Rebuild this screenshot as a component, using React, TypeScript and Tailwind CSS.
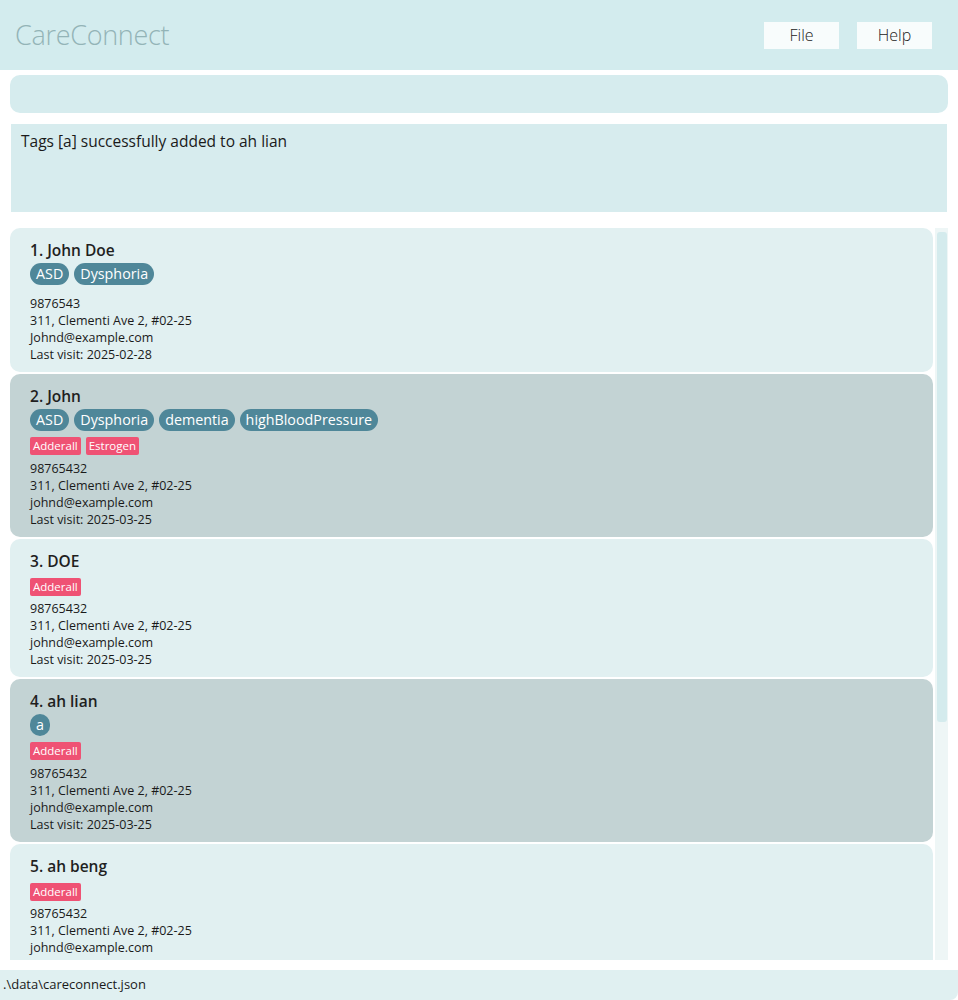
import React from "react";

interface Patient {
  id: number;
  name: string;
  tags: string[];
  meds: string[];
  phone: string;
  address: string;
  email: string;
  lastVisit: string;
}

const patients: Patient[] = [
  {
    id: 1,
    name: "John Doe",
    tags: ["ASD", "Dysphoria"],
    meds: [],
    phone: "9876543",
    address: "311, Clementi Ave 2, #02-25",
    email: "Johnd@example.com",
    lastVisit: "2025-02-28",
  },
  {
    id: 2,
    name: "John",
    tags: ["ASD", "Dysphoria", "dementia", "highBloodPressure"],
    meds: ["Adderall", "Estrogen"],
    phone: "98765432",
    address: "311, Clementi Ave 2, #02-25",
    email: "johnd@example.com",
    lastVisit: "2025-03-25",
  },
  {
    id: 3,
    name: "DOE",
    tags: [],
    meds: ["Adderall"],
    phone: "98765432",
    address: "311, Clementi Ave 2, #02-25",
    email: "johnd@example.com",
    lastVisit: "2025-03-25",
  },
  {
    id: 4,
    name: "ah lian",
    tags: ["a"],
    meds: ["Adderall"],
    phone: "98765432",
    address: "311, Clementi Ave 2, #02-25",
    email: "johnd@example.com",
    lastVisit: "2025-03-25",
  },
  {
    id: 5,
    name: "ah beng",
    tags: [],
    meds: ["Adderall"],
    phone: "98765432",
    address: "311, Clementi Ave 2, #02-25",
    email: "johnd@example.com",
    lastVisit: "2025-03-25",
  },
];

function PatientCard({ p }: { p: Patient }) {
  const dark = p.id % 2 === 0;
  const hasMeds = p.meds.length > 0;
  return (
    <div
      className={`shrink-0 rounded-[10px] pl-5 pt-[11px] pb-[9px] ${
        dark ? "bg-[#c3d3d4]" : "bg-[#e1f0f1]"
      }`}
    >
      <div className="h-[22px] text-[15.5px] leading-[22px] font-semibold text-[#1f1f1f]">
        {p.id}. {p.name}
      </div>
      {p.tags.length > 0 && (
        <div className="mt-[2px] flex gap-[5px]">
          {p.tags.map((t) => (
            <span
              key={t}
              className="h-[22px] rounded-full bg-[#4f8799] px-[6px] text-[14.3px] leading-[22px] text-white"
            >
              {t}
            </span>
          ))}
        </div>
      )}
      {hasMeds && (
        <div className="mt-[6px] flex gap-[5px]">
          {p.meds.map((m) => (
            <span
              key={m}
              className="h-[18px] rounded-[2px] bg-[#ef5274] px-[3px] text-[11.5px] leading-[18px] text-white"
            >
              {m}
            </span>
          ))}
        </div>
      )}
      <div
        className={`${
          hasMeds ? "mt-[4.5px]" : "mt-[10px]"
        } text-[12.5px] leading-[17px] text-[#1a1a1a]`}
      >
        <div>{p.phone}</div>
        <div>{p.address}</div>
        <div>{p.email}</div>
        <div>Last visit: {p.lastVisit}</div>
      </div>
    </div>
  );
}

export default function App() {
  return (
    <div
      className="flex h-[1000px] w-[958px] flex-col overflow-hidden bg-white"
      style={{ fontFamily: '"Open Sans", "Noto Sans", sans-serif' }}
    >
      {/* Header */}
      <header className="flex h-[70px] shrink-0 items-center justify-between bg-[#d3ecee] pl-[15px] pr-[26px]">
        <h1 className="text-[27px] font-light tracking-[-0.3px] text-[#93b4b7]">
          CareConnect
        </h1>
        <div className="flex gap-[18px]">
          <button className="h-[27px] w-[75px] bg-[#f8fcfc] text-[16px] font-light text-[#222]">
            File
          </button>
          <button className="h-[27px] w-[75px] bg-[#f8fcfc] text-[16px] font-light text-[#222]">
            Help
          </button>
        </div>
      </header>

      {/* Command box */}
      <div className="mx-[10px] mt-[5px] h-[38px] shrink-0 rounded-[10px] bg-[#d6ecee]" />

      {/* Result box */}
      <div className="mx-[11px] mt-[11px] h-[88px] shrink-0 bg-[#d7ecee] px-[10px] pt-[6px] text-[15.5px] text-[#1a1a1a]">
        Tags [a] successfully added to ah lian
      </div>

      {/* List */}
      <div className="mt-[16px] flex h-[732px] shrink-0 overflow-hidden">
        <div className="ml-[10px] flex w-[923px] flex-col gap-[2px]">
          {patients.map((p) => (
            <PatientCard key={p.id} p={p} />
          ))}
        </div>
        <div className="ml-[2px] w-[13px] bg-[#eef6f6] pt-[4px]">
          <div className="mx-auto h-[490px] w-[10px] rounded-[3px] bg-[#d4ebed]" />
        </div>
      </div>

      {/* Status bar */}
      <div className="mt-[10px] flex h-[30px] shrink-0 items-center rounded-br-[8px] bg-[#e0f0f1] pl-[3px] text-[13px] text-[#1a1a1a]">
        .\data\careconnect.json
      </div>
    </div>
  );
}
